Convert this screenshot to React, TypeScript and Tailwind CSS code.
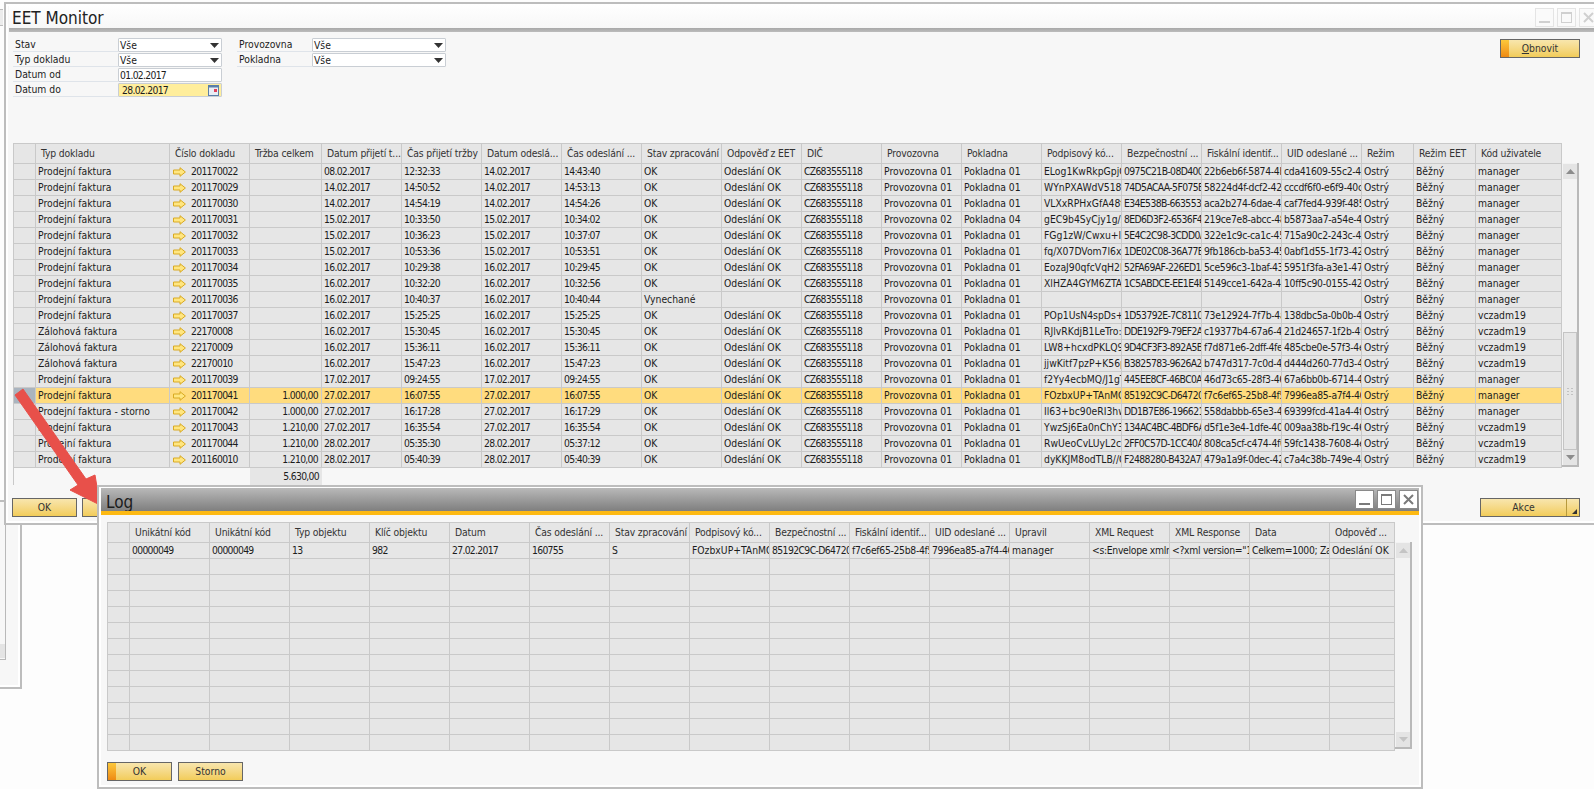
import React from 'react';

const mainGrid =
  'grid grid-cols-[22px_134px_80px_72px_repeat(13,80px)_52px_62px_86px] h-[16px]';
const logGrid = 'grid grid-cols-[22px_repeat(15,80px)_65px] h-[16px]';

const digits = 'tracking-[-0.7px]';
const guid = 'tracking-[-0.6px]';
const guidLower = 'tracking-[-0.3px]';

const mainHeaders = [
  'Typ dokladu', 'Číslo dokladu', 'Tržba celkem', 'Datum přijetí t...', 'Čas přijetí tržby', 'Datum odeslá...',
  'Čas odeslání ...', 'Stav zpracování', 'Odpověď z EET', 'DIČ', 'Provozovna', 'Pokladna', 'Podpisový kó...',
  'Bezpečnostní ...', 'Fiskální identif...', 'UID odeslané ...', 'Režim', 'Režim EET', 'Kód uživatele',
];

const logHeaders = [
  'Unikátní kód', 'Unikátní kód', 'Typ objektu', 'Klíč objektu', 'Datum', 'Čas odeslání ...', 'Stav zpracování',
  'Podpisový kó...', 'Bezpečnostní ...', 'Fiskální identif...', 'UID odeslané ...', 'Upravil', 'XML Request',
  'XML Response', 'Data', 'Odpověď ...',
];

const logValues: [string, string][] = [
  ['00000049', digits], ['00000049', digits], ['13', digits], ['982', digits], ['27.02.2017', digits], ['160755', digits], ['S', ''],
  ['FOzbxUP+TAnMOqk', ''], ['85192C9C-D64720A', guid], ['f7c6ef65-25b8-4f5a', guidLower], ['7996ea85-a7f4-46ab', guidLower], ['manager', ''],
  ['<s:Envelope xmlns', guidLower], ['<?xml version="1.0', guidLower], ['Celkem=1000; Zaklad', guidLower], ['Odeslání OK', ''],
];

// typ, cislo, trzba, prijeti datum, cas, odeslani datum, cas, podpis, bezp, fisk, uid, uzivatel
const rows = [
  ['Prodejní faktura', '201170022', '', '08.02.2017', '12:32:33', '14.02.2017', '14:43:40', 'ELog1KwRkpGpjQ', '0975C21B-08D400A', '22b6eb6f-5874-4bcd', 'cda41609-55c2-4bde', 'manager'],
  ['Prodejní faktura', '201170029', '', '14.02.2017', '14:50:52', '14.02.2017', '14:53:13', 'WYnPXAWdV518Q', '74D5ACAA-5F075BC', '58224d4f-dcf2-42ab', 'cccdf6f0-e6f9-40cd', 'manager'],
  ['Prodejní faktura', '201170030', '', '14.02.2017', '14:54:19', '14.02.2017', '14:54:26', 'VLXxRPHxGfA48tK', 'E34E538B-663553A', 'aca2b274-6dae-43ab', 'caf7fed4-939f-485a', 'manager'],
  ['Prodejní faktura', '201170031', '', '15.02.2017', '10:33:50', '15.02.2017', '10:34:02', 'gEC9b4SyCjy1g/Zx', '8ED6D3F2-6536F4A', '219ce7e8-abcc-48ab', 'b5873aa7-a54e-4cde', 'manager', 'Provozovna 02', 'Pokladna 04'],
  ['Prodejní faktura', '201170032', '', '15.02.2017', '10:36:23', '15.02.2017', '10:37:07', 'FGg1zW/Cwxu+lKs', '5E4C2C98-3CDD0AB', '322e1c9c-ca1c-45ab', '715a90c2-243c-4fde', 'manager'],
  ['Prodejní faktura', '201170033', '', '15.02.2017', '10:53:36', '15.02.2017', '10:53:51', 'fq/X07DVom7l6x4Ta', '1DE02C08-36A77BC', '9fb186cb-ba53-45ab', '0abf1d55-1f73-42de', 'manager'],
  ['Prodejní faktura', '201170034', '', '16.02.2017', '10:29:38', '16.02.2017', '10:29:45', 'EozaJ90qfcVqH2lWs', '52FA69AF-226ED1A', '5ce596c3-1baf-43ab', '5951f3fa-a3e1-47de', 'manager'],
  ['Prodejní faktura', '201170035', '', '16.02.2017', '10:32:20', '16.02.2017', '10:32:56', 'XlHZA4GYM6ZTAbQ', '1C5ABDCE-EE1E4BA', '5149cce1-642a-4cab', '10ff5c90-0155-42de', 'manager'],
  ['Prodejní faktura', '201170036', '', '16.02.2017', '10:40:37', '16.02.2017', '10:40:44', '', '', '', '', 'manager', '', '', 'Vynechané', ''],
  ['Prodejní faktura', '201170037', '', '16.02.2017', '15:25:25', '16.02.2017', '15:25:25', 'POp1UsN4spDs+Qa', '1D53792E-7C8110A', '73e12924-7f7b-4aab', '138dbc5a-0b0b-4cde', 'vczadm19'],
  ['Zálohová faktura', '22170008', '', '16.02.2017', '15:30:45', '16.02.2017', '15:30:45', 'RJlvRKdjB1LeTro:a', 'DDE192F9-79EF2AB', 'c19377b4-67a6-40ab', '21d24657-1f2b-49de', 'vczadm19'],
  ['Zálohová faktura', '22170009', '', '16.02.2017', '15:36:11', '16.02.2017', '15:36:11', 'LW8+hcxdPKLQ9xT', '9D4CF3F3-892A5BC', 'f7d871e6-2dff-4feab', '485cbe0e-57f3-4ede', 'vczadm19'],
  ['Zálohová faktura', '22170010', '', '16.02.2017', '15:47:23', '16.02.2017', '15:47:23', 'jjwKitf7pzP+K56pQ', 'B3825783-9626A2B', 'b747d317-7c0d-4ab', 'd444d260-77d3-4cde', 'vczadm19'],
  ['Prodejní faktura', '201170039', '', '17.02.2017', '09:24:55', '17.02.2017', '09:24:55', 'f2Yy4ecbMQ/J1gTs', '445EE8CF-46BC0AB', '46d73c65-28f3-46ab', '67a6bb0b-6714-4cde', 'manager'],
  ['Prodejní faktura', '201170041', '1.000,00', '27.02.2017', '16:07:55', '27.02.2017', '16:07:55', 'FOzbxUP+TAnMOqk', '85192C9C-D64720A', 'f7c6ef65-25b8-4f5a', '7996ea85-a7f4-46ab', 'manager'],
  ['Prodejní faktura - storno', '201170042', '1.000,00', '27.02.2017', '16:17:28', '27.02.2017', '16:17:29', 'Il63+bc90eRI3hwQa', 'DD1B7E86-196621A', '558dabbb-65e3-4ab', '69399fcd-41a4-4fde', 'manager'],
  ['Prodejní faktura', '201170043', '1.210,00', '27.02.2017', '16:35:54', '27.02.2017', '16:35:54', 'YwzSj6Ea0nChY3Ts', '134AC4BC-4BDF6AB', 'd5f1e3e4-1dfe-40ab', '009aa38b-f19c-46de', 'vczadm19'],
  ['Prodejní faktura', '201170044', '1.210,00', '28.02.2017', '05:35:30', '28.02.2017', '05:37:12', 'RwUeoCvLUyL2cQa', '2FF0C57D-1CC40AB', '808ca5cf-c474-4f0a', '59fc1438-7608-4ede', 'vczadm19'],
  ['Prodejní faktura', '201160010', '1.210,00', '28.02.2017', '05:40:39', '28.02.2017', '05:40:39', 'dyKKJM8odTLB//Qa', 'F2488280-B432A7A', '479a1a9f-0dec-42ab', 'c7a4c38b-749e-4bde', 'vczadm19'],
];

const Cell = ({ children, right, cls = '' }: { children?: React.ReactNode; right?: boolean; cls?: string }) => (
  <div
    className={`flex h-[16px] items-center overflow-hidden whitespace-nowrap border-r border-b border-[#c9c9c9] pl-[2px] ${cls} ${
      right ? 'justify-end pr-[3px]' : ''
    }`}
  >
    {children}
  </div>
);

const HeadCell = ({ children }: { children?: React.ReactNode }) => (
  <div className="flex h-[20px] items-center overflow-hidden whitespace-nowrap border-r border-b border-[#c9c9c9] pl-[5px] tracking-[-0.15px] text-[#333]">
    {children}
  </div>
);

const LinkArrow = () => (
  <svg width="13" height="10" viewBox="0 0 13 10" className="mr-[5px] ml-[1px] shrink-0">
    <path d="M0.5 3H7V0.7L12.4 5L7 9.3V7H0.5Z" fill="#ffe680" stroke="#d9aa22" strokeWidth="1" />
  </svg>
);

const Caret = () => (
  <svg width="9" height="5" viewBox="0 0 9 5" className="shrink-0">
    <path d="M0 0H9L4.5 5Z" fill="#333" />
  </svg>
);

const Field = ({ value, select, focused, width, date }: { value: string; select?: boolean; focused?: boolean; width: string; date?: boolean }) => (
  <div
    className={`flex h-[14px] items-center justify-between rounded-[1px] border border-[#c9ced4] pl-[1px] pr-[2px] ${width} ${
      focused ? 'bg-[#ffee9c] pl-[3px]' : 'bg-white'
    }`}
  >
    <span className={date ? digits : ''}>{value}</span>
    {select ? <Caret /> : null}
    {focused ? (
      <svg width="11" height="11" viewBox="0 0 11 11" className="shrink-0">
        <rect x="0.5" y="0.5" width="10" height="10" fill="#e8eef6" stroke="#5b7fa8" />
        <rect x="0.5" y="0.5" width="10" height="2" fill="#5b7fa8" />
        <rect x="6" y="4" width="3" height="3" fill="#e0405a" />
      </svg>
    ) : null}
  </div>
);

const Label = ({ text, width }: { text: string; width: string }) => (
  <div className={`flex h-[14px] items-center border-b border-[#dfe4ea] pl-[2px] ${width}`}>{text}</div>
);

const Btn = ({ label, primary, width = 'w-[65px]' }: { label?: React.ReactNode; primary?: boolean; width?: string }) => (
  <div
    className={`flex h-[19px] ${width} shrink-0 border border-[#666] bg-gradient-to-b from-[#f8e6ad] to-[#f2cc58] text-[#333]`}
  >
    {primary ? <div className="w-[8px] shrink-0 bg-gradient-to-b from-[#fcc83a] to-[#ee8a12]" /> : null}
    <div className={`flex flex-1 items-center justify-center ${primary ? 'pr-[8px]' : ''}`}>{label}</div>
  </div>
);

const WinButtons = ({ faded }: { faded?: boolean }) => {
  const box = `flex h-[19px] w-[19px] items-center justify-center border ${
    faded ? 'border-[#e4e4e4] bg-[#fafafa]' : 'border-[#8a8a8a] bg-white'
  }`;
  const ink = faded ? '#d0d0d0' : '#7a7a7a';
  return (
    <div className="flex gap-[3px]">
      <div className={box}>
        <svg width="13" height="13" viewBox="0 0 13 13">
          <rect x="1" y="10" width="11" height="2" fill={ink} />
        </svg>
      </div>
      <div className={box}>
        <svg width="13" height="13" viewBox="0 0 13 13">
          <rect x="1.5" y="1.5" width="10" height="10" fill="none" stroke={ink} />
          <rect x="1" y="1" width="11" height="2" fill={ink} />
        </svg>
      </div>
      <div className={box}>
        <svg width="13" height="13" viewBox="0 0 13 13">
          <path d="M2 2L11 11M11 2L2 11" stroke={ink} strokeWidth="2" />
        </svg>
      </div>
    </div>
  );
};

const ScrollArrow = ({ down, light }: { down?: boolean; light?: boolean }) => (
  <div className="flex h-[15px] w-full shrink-0 items-center justify-center bg-[#e4e4e4]">
    <svg width="9" height="5" viewBox="0 0 9 5">
      <path d={down ? 'M0 0H9L4.5 5Z' : 'M0 5H9L4.5 0Z'} fill={light ? '#c4c4c4' : '#8c8c8c'} />
    </svg>
  </div>
);

const Grip = () => (
  <svg width="6" height="7" viewBox="0 0 6 7">
    <path d="M0 0h2v1H0zM4 0h2v1H4zM0 3h2v1H0zM4 3h2v1H4zM0 6h2v1H0zM4 6h2v1H4z" fill="#c2c2c2" />
  </svg>
);

const MainWindow = () => (
  <div className="absolute left-[4px] top-[2px] flex h-[523px] w-[1600px] flex-col border-2 border-[#bdbdbd] bg-[#f7f7f7] shadow-[inset_2px_2px_0_#fff,inset_0_-2px_0_#fff]">
    <div className="ml-[3px] flex h-[24px] shrink-0 items-center justify-between bg-gradient-to-b from-white to-[#f7f7f7] pr-[4px]">
      <span className="pl-[3px] pt-[5px] text-[17px] leading-none text-[#222]">EET Monitor</span>
      <div className="mt-[3px]">
        <WinButtons faded />
      </div>
    </div>
    <div className="ml-[3px] h-[4px] shrink-0 bg-gradient-to-b from-[#a8a8a8] to-[#bcbcbc]" />

    <div className="flex h-[111px] shrink-0 justify-between pl-[7px] pt-[6px] pr-[22px]">
      <div className="flex gap-[15px]">
        <div className="flex w-[209px] flex-col gap-[1px]">
          <div className="flex"><Label text="Stav" width="w-[105px]" /><Field value="Vše" select width="w-[104px]" /></div>
          <div className="flex"><Label text="Typ dokladu" width="w-[105px]" /><Field value="Vše" select width="w-[104px]" /></div>
          <div className="flex"><Label text="Datum od" width="w-[105px]" /><Field value="01.02.2017" date width="w-[104px]" /></div>
          <div className="flex"><Label text="Datum do" width="w-[105px]" /><Field value="28.02.2017" date focused width="w-[104px]" /></div>
        </div>
        <div className="flex flex-col gap-[1px]">
          <div className="flex"><Label text="Provozovna" width="w-[75px]" /><Field value="Vše" select width="w-[134px]" /></div>
          <div className="flex"><Label text="Pokladna" width="w-[75px]" /><Field value="Vše" select width="w-[134px]" /></div>
        </div>
      </div>
      <div className="pt-[1px]">
        <Btn width="w-[80px]" primary label={<span><span className="underline">O</span>bnovit</span>} />
      </div>
    </div>

    <div className="flex shrink-0 pl-[7px]">
      <div className="w-[1549px] border-l border-t border-[#c9c9c9]">
        <div className="grid h-[20px] grid-cols-[22px_134px_80px_72px_repeat(13,80px)_52px_62px_86px] bg-[#e6e6e6]">
          <HeadCell />
          {mainHeaders.map((h, i) => (
            <HeadCell key={i}>{h}</HeadCell>
          ))}
        </div>
        {rows.map((r) => {
          const selected = r[1] === '201170041';
          return (
            <div key={r[1]} className={`${mainGrid} ${selected ? 'bg-[#ffdc7e]' : 'bg-[#e6e6e6]'}`}>
              <div className={`h-[16px] border-r border-b border-[#c9c9c9] ${selected ? 'bg-[#aab4bf]' : ''}`} />
              <Cell>{r[0]}</Cell>
              <Cell cls={digits}><LinkArrow />{r[1]}</Cell>
              <Cell right cls={digits}>{r[2]}</Cell>
              <Cell cls={digits}>{r[3]}</Cell>
              <Cell cls={digits}>{r[4]}</Cell>
              <Cell cls={digits}>{r[5]}</Cell>
              <Cell cls={digits}>{r[6]}</Cell>
              <Cell>{r[14] ?? 'OK'}</Cell>
              <Cell>{r[15] ?? 'Odeslání OK'}</Cell>
              <Cell cls={digits}>CZ683555118</Cell>
              <Cell>{r[12] || 'Provozovna 01'}</Cell>
              <Cell>{r[13] || 'Pokladna 01'}</Cell>
              <Cell>{r[7]}</Cell>
              <Cell cls={guid}>{r[8]}</Cell>
              <Cell cls={guidLower}>{r[9]}</Cell>
              <Cell cls={guidLower}>{r[10]}</Cell>
              <Cell>Ostrý</Cell>
              <Cell>Běžný</Cell>
              <Cell>{r[11]}</Cell>
            </div>
          );
        })}
        <div className={`ml-[236px] flex h-[17px] w-[72px] items-center justify-end bg-[#e6e6e6] pr-[3px] ${digits}`}>5.630,00</div>
      </div>
      <div className="mt-[20px] flex h-[304px] w-[17px] shrink-0 flex-col border-2 border-[#b9b9b9] border-l-0 border-t-0 bg-[#f3f3f3] pl-[1px] pt-[1px]">
        <ScrollArrow />
        <div className="mt-[153px] flex h-[118px] items-center justify-center border border-[#c4c4c4] bg-[#e6e6e6]">
          <Grip />
        </div>
        <div className="mt-auto"><ScrollArrow down /></div>
      </div>
    </div>

    <div className="mt-auto mb-[6px] flex justify-between pl-[6px] pr-[22px]">
      <div className="flex gap-[5px]">
        <Btn label="OK" />
        <Btn />
      </div>
      <div className="flex h-[19px] w-[100px] border border-[#666] bg-gradient-to-b from-[#f8e6ad] to-[#f2cc58] text-[#333]">
        <div className="flex flex-1 items-center justify-center">Akce</div>
        <div className="relative w-[13px] border-l border-[#b79a3c]">
          <svg width="5" height="5" viewBox="0 0 5 5" className="absolute right-[2px] bottom-[2px]">
            <path d="M5 0V5H0Z" fill="#333" />
          </svg>
        </div>
      </div>
    </div>
  </div>
);

const LogWindow = () => (
  <div className="absolute left-[97px] top-[485px] flex h-[304px] w-[1326px] flex-col border-2 border-[#bdbdbd] bg-[#f7f7f7] pl-[2px] pr-[2px] pt-[1px] shadow-[inset_0_0_0_2px_#fff]">
    <div className="flex h-[23px] shrink-0 items-center justify-between bg-gradient-to-b from-[#b9b9b9] to-[#7f7f7f] pr-[1px]">
      <span className="pl-[5px] pt-[5px] text-[17px] leading-none text-[#1d1d1d]">Log</span>
      <WinButtons />
    </div>
    <div className="h-[4px] shrink-0 bg-[#fdb913]" />

    <div className="mt-[7px] flex pl-[6px]">
      <div className="w-[1288px] border-l border-t border-[#c9c9c9]">
        <div className="grid h-[20px] grid-cols-[22px_repeat(15,80px)_65px] bg-[#e6e6e6]">
          <HeadCell />
          {logHeaders.map((h, i) => (
            <HeadCell key={i}>{h}</HeadCell>
          ))}
        </div>
        <div className={`${logGrid} bg-[#e6e6e6]`}>
          <Cell />
          {logValues.map(([v, cls], i) => (
            <Cell key={i} cls={cls}>{v}</Cell>
          ))}
        </div>
        {Array.from({ length: 12 }).map((_, i) => (
          <div key={i} className={`${logGrid} bg-[#e6e6e6]`}>
            {Array.from({ length: 17 }).map((__, j) => (
              <Cell key={j} />
            ))}
          </div>
        ))}
      </div>
      <div className="mt-[20px] flex h-[207px] w-[17px] shrink-0 flex-col justify-between border-2 border-[#b9b9b9] border-l-0 border-t-0 bg-[#f3f3f3] pl-[1px] pt-[1px]">
        <ScrollArrow light />
        <ScrollArrow down light />
      </div>
    </div>

    <div className="mt-[11px] flex gap-[6px] pl-[6px]">
      <Btn label="OK" primary />
      <Btn label="Storno" />
    </div>
  </div>
);

const BackWindow = () => (
  <div className="absolute left-[-4px] top-[500px] flex h-[189px] w-[26px] border-2 border-[#bdbdbd] bg-[#f7f7f7] shadow-[inset_-2px_-2px_0_#fff]">
    <div className="flex h-[158px] w-[8px] items-end border-r border-b border-[#b9b9b9]">
      <div className="mb-[1px] h-[14px] w-[7px] bg-[#e4e4e4]" />
    </div>
  </div>
);

export default function App() {
  return (
    <div className="relative h-[789px] w-[1594px] overflow-hidden bg-[#fdfdfd] font-['DejaVu_Sans_Condensed','DejaVu_Sans',sans-serif] text-[10.3px] leading-none text-[#1c1c1c]">
      <BackWindow />
      <div className="absolute left-0 top-[9px] h-[17px] w-[3px] border-y border-[#bdbdbd] bg-[#ececec]" />
      <MainWindow />
      <svg width="110" height="130" viewBox="0 0 110 130" className="absolute left-0 top-[385px]">
        <path
          d="M15 10 L23 4 L86 94 L95 90 L100 120 L70 105 L78 100 Z"
          fill="#e8504a"
          stroke="#e8504a"
          strokeWidth="1"
          strokeLinejoin="round"
        />
      </svg>
      <LogWindow />
    </div>
  );
}
